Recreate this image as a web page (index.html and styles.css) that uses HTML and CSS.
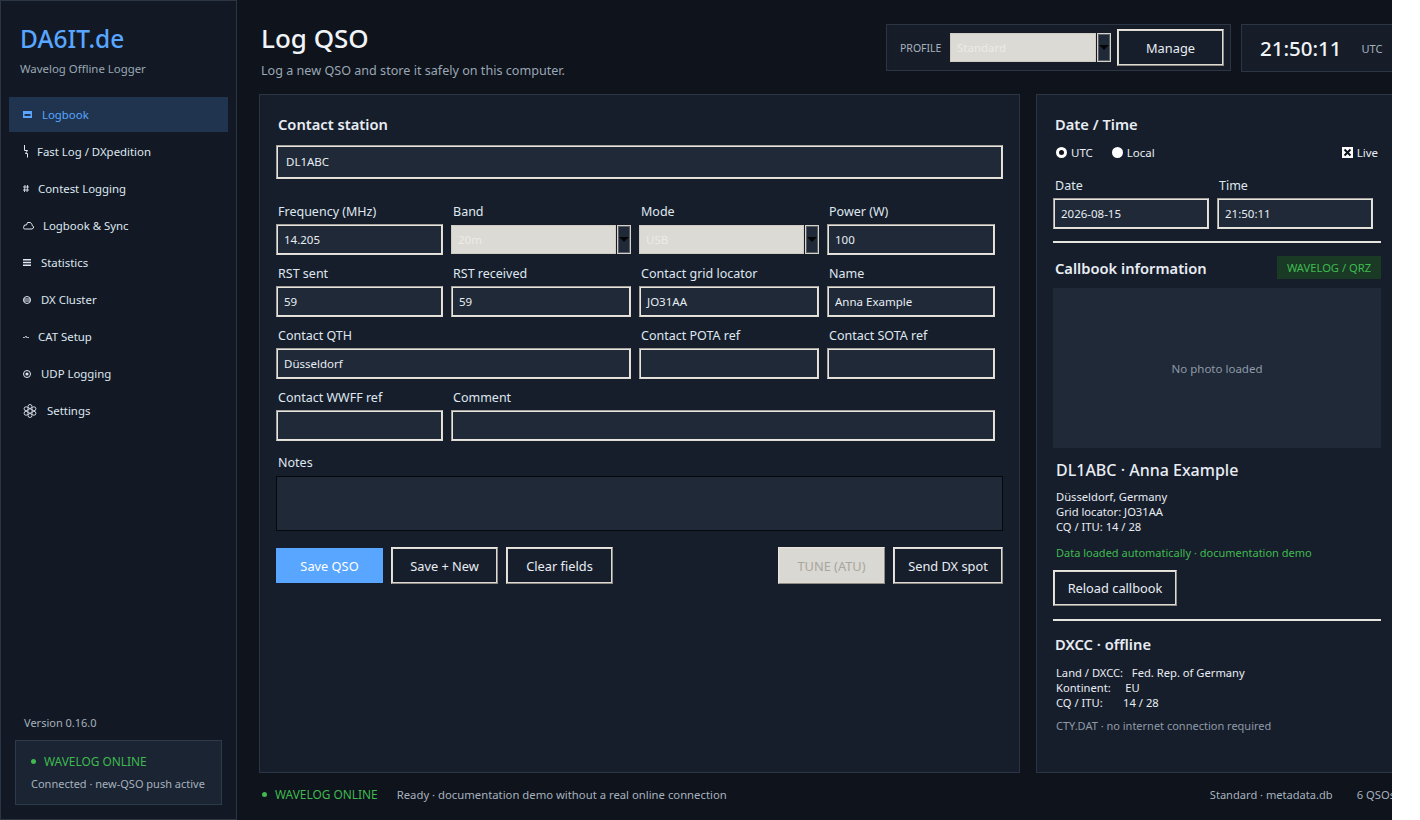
FILE: index.html
```html
<!DOCTYPE html>
<html lang="en">
<head>
<meta charset="utf-8">
<title>DA6IT.de</title>
<link rel="stylesheet" href="styles.css">
</head>
<body>
<div class="app">
  <aside class="sidebar">
    <div class="brand">DA6IT.de</div>
    <div class="tagline">Wavelog Offline Logger</div>
    <nav class="nav">
      <a class="nav-item active"><svg width="10" height="8" viewBox="0 0 10 8"><path fill="currentColor" d="M0 0h9v7H0z"/><path fill="#20344f" d="M1.500 3h6v2h-6z"/></svg>Logbook</a>
      <a class="nav-item"><svg width="5" height="13" viewBox="0 0 5 13"><path fill="none" stroke="currentColor" d="M1.500 0v5.500h3L2.500 8.500h2v4"/></svg>Fast Log / DXpedition</a>
      <a class="nav-item"><svg width="6" height="9" viewBox="0 0 6 9"><path fill="none" stroke="currentColor" stroke-width=".9" d="M2 1 1.500 8M4.600 1 4 8M0 3h6M0 6h6"/></svg>Contest Logging</a>
      <a class="nav-item"><svg width="11" height="9" viewBox="0 0 11 9"><path fill="none" stroke="currentColor" d="M2.500 8H1.200L.5 6.500 1.500 4h2L4.500 1.500h3L9 3.500v1l1.500 1v1.500L9 8z"/></svg>Logbook &amp; Sync</a>
      <a class="nav-item"><svg width="9" height="7" viewBox="0 0 9 7"><path fill="currentColor" d="M0 0h8v1.500H0zM0 2.700h8v1.500H0zM0 5.400h8V7H0z"/></svg>Statistics</a>
      <a class="nav-item"><svg width="9" height="8" viewBox="0 0 9 8"><circle cx="4" cy="4" r="3.500" fill="none" stroke="currentColor"/><path stroke="currentColor" d="M.5 3h7M.5 5h7"/></svg>DX Cluster</a>
      <a class="nav-item"><svg width="6" height="4" viewBox="0 0 6 4"><path fill="none" stroke="currentColor" stroke-width=".8" d="M0 2.500h1.800L3 1l1 2 .5-.5H6"/></svg>CAT Setup</a>
      <a class="nav-item"><svg width="9" height="8" viewBox="0 0 9 8"><circle cx="4" cy="4" r="3.500" fill="none" stroke="currentColor"/><circle cx="4" cy="4" r="1.600" fill="currentColor"/></svg>UDP Logging</a>
      <a class="nav-item"><svg width="15" height="14" viewBox="0 0 15 14"><g fill="none" stroke="currentColor" stroke-width=".9"><circle cx="7" cy="7" r="2.200"/><circle cx="7" cy="2.500" r="2"/><circle cx="7" cy="11.500" r="2"/><circle cx="3.100" cy="4.750" r="2"/><circle cx="10.900" cy="4.750" r="2"/><circle cx="3.100" cy="9.250" r="2"/><circle cx="10.900" cy="9.250" r="2"/></g></svg>Settings</a>
    </nav>
    <div class="version">Version 0.16.0</div>
    <div class="status-card">
      <div class="online"><i class="dot"></i>WAVELOG ONLINE</div>
      <div class="status-sub">Connected · new-QSO push active</div>
    </div>
  </aside>

  <main class="main">
    <header class="header">
      <div class="titles">
        <h1>Log QSO</h1>
        <p>Log a new QSO and store it safely on this computer.</p>
      </div>
      <div class="profile-box">
        <span class="profile-label">PROFILE</span>
        <div class="select profile-select"><span class="select-value">Standard</span><b class="arrow"></b></div>
        <button class="btn manage">Manage</button>
      </div>
      <div class="clock-box"><span class="clock">21:50:11</span><span class="utc">UTC</span></div>
    </header>

    <div class="content">
      <section class="panel contact">
        <h2>Contact station</h2>
        <div class="input call">DL1ABC</div>
        <div class="form-grid">
          <label class="field"><span>Frequency (MHz)</span><div class="input">14.205</div></label>
          <label class="field"><span>Band</span><div class="select"><span class="select-value">20m</span><b class="arrow"></b></div></label>
          <label class="field"><span>Mode</span><div class="select"><span class="select-value">USB</span><b class="arrow"></b></div></label>
          <label class="field"><span>Power (W)</span><div class="input">100</div></label>
          <label class="field"><span>RST sent</span><div class="input">59</div></label>
          <label class="field"><span>RST received</span><div class="input">59</div></label>
          <label class="field"><span>Contact grid locator</span><div class="input">JO31AA</div></label>
          <label class="field"><span>Name</span><div class="input">Anna Example</div></label>
          <label class="field span2"><span>Contact QTH</span><div class="input">Düsseldorf</div></label>
          <label class="field"><span>Contact POTA ref</span><div class="input"></div></label>
          <label class="field"><span>Contact SOTA ref</span><div class="input"></div></label>
          <label class="field"><span>Contact WWFF ref</span><div class="input"></div></label>
          <label class="field span3"><span>Comment</span><div class="input"></div></label>
        </div>
        <div class="notes-label">Notes</div>
        <div class="notes"></div>
        <div class="actions">
          <button class="btn primary">Save QSO</button>
          <button class="btn">Save + New</button>
          <button class="btn">Clear fields</button>
          <span class="spacer"></span>
          <button class="btn disabled">TUNE (ATU)</button>
          <button class="btn wide">Send DX spot</button>
        </div>
      </section>

      <section class="panel side">
        <h2>Date / Time</h2>
        <div class="time-opts">
          <span class="opt"><i class="radio on"></i>UTC</span>
          <span class="opt"><i class="radio"></i>Local</span>
          <span class="spacer"></span>
          <span class="opt"><svg width="11" height="11" viewBox="0 0 11 11"><path fill="#fff" d="M0 0h11v11H0z"/><path stroke="#0f141d" stroke-width="2" d="M2.500 2.500l6 6M8.500 2.500l-6 6"/></svg>Live</span>
        </div>
        <div class="dt-grid">
          <label class="field"><span>Date</span><div class="input">2026-08-15</div></label>
          <label class="field"><span>Time</span><div class="input">21:50:11</div></label>
        </div>
        <hr class="rule">
        <div class="cb-head"><h2>Callbook information</h2><span class="tag">WAVELOG / QRZ</span></div>
        <div class="photo">No photo loaded</div>
        <div class="cb-name">DL1ABC · Anna Example</div>
        <div class="cb-info">Düsseldorf, Germany<br>Grid locator: JO31AA<br>CQ / ITU: 14 / 28</div>
        <div class="cb-note">Data loaded automatically · documentation demo</div>
        <button class="btn reload">Reload callbook</button>
        <hr class="rule second">
        <h2 class="dxcc-title">DXCC · offline</h2>
        <div class="dxcc">Land / DXCC:   Fed. Rep. of Germany
Kontinent:     EU
CQ / ITU:       14 / 28</div>
        <div class="cty">CTY.DAT · no internet connection required</div>
      </section>
    </div>

    <footer class="statusbar">
      <span class="online"><i class="dot"></i>WAVELOG ONLINE</span>
      <span class="ready">Ready · documentation demo without a real online connection</span>
      <span class="spacer"></span>
      <span class="meta">Standard · metadata.db</span>
      <span class="count">6 QSOs</span>
    </footer>
  </main>
</div>
</body>
</html>
```
FILE: styles.css
```css
* { box-sizing: border-box; }
html, body { margin: 0; height: 100%; background: #fff; }
body { font-family: "Noto Sans", sans-serif; font-size: 12px; color: #e8edf4; }
h1, h2, p { margin: 0; }

.app { width: 1392px; height: 820px; display: flex; overflow: hidden; background: #0e131c; }

.sidebar {
  width: 237px; flex: none; display: flex; flex-direction: column;
  background: #121924; border: 1px solid #2b3544; padding: 0 8px 14px 8px;
}
.brand { margin: 21px 0 0 11px; font-size: 24.500px; font-weight: 500; line-height: 34px; color: #58a6ff; }
.tagline { margin: 4px 0 0 11px; font-size: 11.400px; line-height: 17px; color: #9aa7b4; }
.nav { display: flex; flex-direction: column; gap: 2px; margin-top: 20px; }
.nav-item {
  height: 35px; display: flex; align-items: center; gap: 9px; padding-left: 14px;
  color: #dfe7f0; font-size: 11.400px;
}
.nav-item.active { background: #20344f; color: #58a6ff; }
.nav-item svg { flex: none; }
.version { margin: auto 0 0 15px; line-height: 17px; font-size: 11px; color: #a6b1bd; }
.status-card {
  margin: 9px 0 0 6px; height: 65px; width: 207px; padding: 12px 15px;
  background: #1a2432; border: 1px solid #2d3a4a;
}
.online { display: flex; align-items: center; color: #3fb950; font-size: 11.900px; }
.dot { width: 5px; height: 5px; margin-right: 8px; border-radius: 50%; background: #3fb950; }
.status-sub { margin-top: 7px; color: #a6b1bd; font-size: 11px; line-height: 16px; }

.main { flex: 1; min-width: 0; display: flex; flex-direction: column; padding: 0 0 0 22px; }

.header { height: 94px; display: flex; align-items: flex-start; }
.titles { flex: 1; padding: 19px 0 0 2px; }
h1 { font-size: 26px; font-weight: 500; line-height: 38px; color: #f0f4f8; }
.titles p { margin-top: 5px; font-size: 12.600px; line-height: 17px; color: #9aa7b4; }
.profile-box {
  margin-top: 24px; width: 345px; height: 47px; display: flex; align-items: center;
  padding-left: 13px; background: #161d29; border: 1px solid #2b3544;
}
.profile-label { width: 50px; font-size: 10.500px; color: #a6b1bd; }
.manage { width: 107px; height: 36px; margin-left: 6px; }
.profile-box .select { width: 161px; }
.clock-box {
  margin: 24px -20px 0 10px; width: 171px; height: 48px; flex: none; display: flex; align-items: center;
  padding-left: 18px; background: #161d29; border: 1px solid #2b3544;
}
.clock { font-size: 20.500px; font-weight: 500; color: #f0f4f8; }
.utc { margin-left: 20px; font-size: 11px; color: #a6b1bd; }

.content { display: flex; gap: 16px; height: 679px; }
.panel { background: #171e2b; border: 1px solid #2b3544; }
h2 { font-size: 14.700px; font-weight: 600; line-height: 20px; color: #e8edf4; }

.contact { width: 761px; flex: none; padding: 19px 16px 0 16px; }
.contact h2 { padding-left: 2px; }
.input {
  height: 31px; display: flex; align-items: center; padding-left: 7px; font-size: 11.500px;
  background: #1f2937; color: #e8edf4; border: 1px solid; border-color: #a5a29b #dedbd4 #dedbd4 #a5a29b;
  box-shadow: inset 0 0 0 1px #e8e5de;
}
.call { height: 34px; margin-top: 11px; padding: 0 0 2px 9px; }
.select { height: 29px; margin: 1px 0; display: flex; gap: 1px; }
.select-value {
  flex: 1; display: flex; align-items: center; padding-left: 6px; font-size: 11.500px;
  background: #dcdad4; color: #ecebe6; border: 1px solid #cfccc4;
}
.arrow {
  width: 14px; position: relative; background: #1f2937; border: 1px solid #d6d3cb;
  box-shadow: inset 0 0 0 1px #5b5f66;
}
.arrow::after {
  content: ""; position: absolute; left: 1px; top: 11px;
  border: 5px solid transparent; border-bottom: 0; border-top-color: #050505;
}
.form-grid { display: grid; grid-template-columns: 167px 180px 180px 168px; gap: 10px 8px; margin-top: 24px; }
.field { display: flex; flex-direction: column; min-width: 0; }
.field > span { height: 18px; padding-left: 2px; line-height: 17px; font-size: 12.500px; color: #dfe7f0; margin-bottom: 3px; }
.span2 { grid-column: span 2; }
.span3 { grid-column: span 3; }
.notes-label { margin-top: 13px; padding-left: 2px; line-height: 17px; font-size: 12.500px; color: #dfe7f0; }
.notes { height: 55px; margin-top: 5px; background: #1f2937; border: 1px solid #05070a; }
.actions { display: flex; gap: 8px; margin-top: 16px; align-items: center; }
.spacer { flex: 1; }
.btn {
  height: 37px; padding: 0; font: 12.800px "Noto Sans", sans-serif; color: #e8edf4;
  background: #171e2b; border: 1px solid; border-color: #e8e5de #8f8c86 #8f8c86 #e8e5de;
  box-shadow: inset 0 0 0 1px #dedbd4;
}
.actions .btn { width: 107px; }
.actions .wide { width: 110px; }
.actions .primary { height: 35px; background: #58a6ff; border: 0; box-shadow: none; color: #fff; }
.disabled { background: #dad8d2; color: #a8a6a0; }

.side { width: 370px; flex: none; padding: 19px 0 0 16px; }
.side > h2 { padding-left: 2px; }
.time-opts { width: 322px; display: flex; align-items: center; gap: 19px; margin: 9px 0 0 3px; height: 18px; font-size: 11.500px; }
.opt { display: flex; align-items: center; gap: 4px; }
.radio { width: 11px; height: 11px; border-radius: 50%; background: #fff; }
.radio.on { border: 3px solid #fff; background: #0f141d; }
.dt-grid { display: grid; grid-template-columns: 156px 156px; gap: 8px; margin-top: 16px; width: 320px; }
.rule { width: 328px; height: 2px; margin: 12px 0 0; border: 0; background: #e6e4de; }
.cb-head { width: 328px; display: flex; justify-content: space-between; align-items: center; margin-top: 13px; }
.cb-head h2 { padding-left: 2px; }
.tag { width: 104px; height: 23px; line-height: 23px; text-align: center; font-size: 11.200px; color: #3fb950; background: #1a3a26; }
.photo { width: 328px; height: 160px; margin-top: 9px; display: flex; align-items: center; justify-content: center; background: #1f2937; color: #8e9aa8; font-size: 11.500px; }
.cb-name { margin: 11px 0 0 3px; font-size: 16px; font-weight: 500; line-height: 23px; }
.cb-info { margin: 7px 0 0 3px; font-size: 11.200px; line-height: 15px; }
.cb-note { margin: 11px 0 0 3px; font-size: 11px; line-height: 16px; color: #3fb950; }
.reload { display: block; margin-top: 9px; width: 124px; height: 36px; }
.second { margin-top: 13px; }
.dxcc-title { margin-top: 13px; }
.dxcc { margin: 11px 0 0 3px; white-space: pre; font-size: 11.200px; line-height: 15px; }
.cty { margin: 8px 0 0 3px; font-size: 11px; line-height: 16px; color: #8e9aa8; }

.statusbar { flex: 1; display: flex; align-items: center; padding: 0 0 5px 3px; font-size: 11.300px; color: #a6b1bd; }
.statusbar .ready { margin-left: 19px; }
.meta { font-size: 11.100px; }
.count { margin-left: 24px; margin-right: -3px; white-space: nowrap; font-size: 11.200px; }
```
